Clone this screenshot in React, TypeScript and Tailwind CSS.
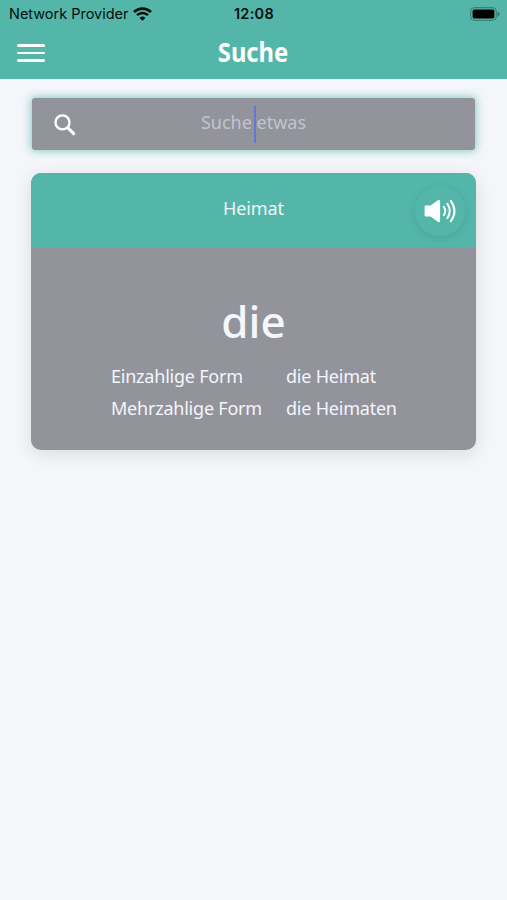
const forms = [
  {label: 'Einzahlige Form', value: 'die Heimat'},
  {label: 'Mehrzahlige Form', value: 'die Heimaten'}
]

function WifiIcon() {
  return (
    <svg className="w-[19px] h-[14px]" viewBox="0 0 19 14" fill="none" stroke="#04100e">
      <path d="M1 5a12.2 12.2 0 0 1 17 0" strokeWidth="2.7" />
      <path d="M4 8.2a7.8 7.8 0 0 1 11 0" strokeWidth="2.5" />
      <path d="M9.5 13.8 6.6 10.9a4.1 4.1 0 0 1 5.8 0z" fill="#04100e" stroke="none" />
    </svg>
  )
}

function BatteryIcon() {
  return (
    <svg className="w-[30px] h-[14px]" viewBox="0 0 30 14">
      <rect x="0.7" y="0.7" width="25.6" height="12.6" rx="3.6" fill="none" stroke="#37776d" />
      <rect x="2.6" y="2.5" width="21.8" height="9" rx="1.8" fill="#000" />
      <path d="M27.5 4.5q2.3 1 2.3 2.6t-2.3 2.6z" fill="#37776d" />
    </svg>
  )
}

function SearchIcon() {
  return (
    <svg className="w-[22px] h-[22px]" viewBox="0 0 22 22" fill="none" stroke="#fff">
      <circle cx="8.5" cy="8.4" r="7" strokeWidth="2.4" />
      <path d="m13.4 13.4 7.2 7.2" strokeWidth="3" />
    </svg>
  )
}

function SpeakerIcon() {
  return (
    <svg className="w-[32px] h-[24px]" viewBox="0 0 32 24" fill="none" stroke="#fff" strokeLinecap="round">
      <path
        d="M1.6 6.6h5l7.2-5.4q2.3-1 2.3 1v19.6q0 2-2.3 1l-7.2-5.4h-5q-1 0-1-1V7.6q0-1 1-1z"
        fill="#fff"
        stroke="none"
      />
      <path d="M19.8 7.8q3 4.2 0 8.4" strokeWidth="2" />
      <path d="M23.3 4.8q5 7.2 0 14.4" strokeWidth="2" />
      <path d="M26.8 1.8q7.4 10.2 0 20.4" strokeWidth="2" />
    </svg>
  )
}

function Header() {
  return (
    <header className="h-[79px] bg-[#53b6a9]">
      {/* Status bar */}
      <div className="grid grid-cols-3 items-center h-[27px] pl-[8px] pr-[7px] font-['Inter',sans-serif] text-[#04100e]">
        <div className="flex items-center gap-[5px] pl-px">
          <span className="text-[14.5px] tracking-[-0.02px] whitespace-nowrap">Network Provider</span>
          <WifiIcon />
        </div>
        <span className="text-center text-[14.5px] font-semibold tracking-[0.3px]">12:08</span>
        <div className="flex justify-end">
          <BatteryIcon />
        </div>
      </div>
      {/* Title bar */}
      <div className="grid grid-cols-3 items-center h-[52px] px-[17px]">
        <button aria-label="Menu" className="flex flex-col gap-[5px] w-[28px]">
          <span className="h-[2.4px] bg-white rounded-full" />
          <span className="h-[2.4px] bg-white rounded-full" />
          <span className="h-[2.4px] bg-white rounded-full" />
        </button>
        <h1 className="pb-[3px] text-center text-[27px] leading-[47px] font-bold text-white font-['Noto_Sans',sans-serif]">
          <span className="inline-block scale-x-[0.88]">Suche</span>
        </h1>
      </div>
    </header>
  )
}

function SearchField() {
  return (
    <div className="relative flex items-center justify-center h-[52px] mx-[32px] rounded-[3px] bg-[#92939b] shadow-[0_0_8px_1px_#53b6a9b0]">
      <div className="absolute left-[22px] top-[16px]">
        <SearchIcon />
      </div>
      <span className="pb-[3px] text-[18px] text-[#c4c4cc] whitespace-nowrap">Suche etwas</span>
      <span className="absolute left-[222px] top-[8px] w-[2px] h-[37px] bg-[#6478d0]" />
    </div>
  )
}

function WordCard() {
  return (
    <section className="h-[277px] mx-[31px] mt-[23px] rounded-[10px] bg-[#92939b] shadow-[0_4px_18px_#0000001c] text-[#f4f6fb]">
      <div className="relative flex items-center justify-center h-[74px] rounded-t-[10px] bg-[#53b6a9]">
        <span className="pb-[3px] text-[18px] tracking-[-0.1px]">Heimat</span>
        <button
          aria-label="Aussprache"
          className="absolute right-[11px] top-[13px] flex items-center justify-center w-[50px] h-[50px] rounded-full bg-[#53b6a9] shadow-[0_2px_10px_#00000018]">
          <SpeakerIcon />
        </button>
      </div>
      <p className="pt-[44px] text-center text-[44px] leading-[60px] font-medium">die</p>
      <div className="grid grid-cols-[175px_1fr] pl-[80px] mt-[9px] text-[18px] leading-[32px] tracking-[-0.22px] whitespace-nowrap">
        {forms.map(form => (
          <div key={form.label} className="contents">
            <span>{form.label}</span>
            <span>{form.value}</span>
          </div>
        ))}
      </div>
    </section>
  )
}

export default function App() {
  return (
    <div className="w-full h-screen overflow-hidden bg-[#f4f6fa] font-['Noto_Sans',sans-serif]">
      <Header />
      <main className="pt-[19px]">
        <SearchField />
        <WordCard />
      </main>
    </div>
  )
}
